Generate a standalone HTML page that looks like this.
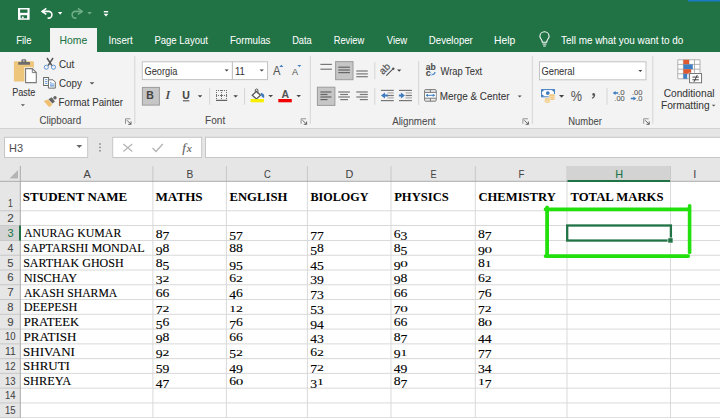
<!DOCTYPE html><html><head><meta charset="utf-8"><style>*{margin:0;padding:0}html,body{width:720px;height:418px;overflow:hidden;background:#fff}svg{display:block}</style></head><body>
<svg width="720" height="418" viewBox="0 0 720 418">
<rect x="0" y="0" width="720" height="52" fill="#217346" />
<rect x="688" y="0" width="32" height="1.5" fill="#1b7ac3" />
<rect x="0" y="52" width="720" height="76" fill="#f3f3f3" />
<rect x="50" y="28" width="47" height="24" fill="#f3f3f3" />
<rect x="0" y="52" width="720" height="77" fill="#f3f3f3" />
<rect x="0" y="128" width="720" height="1" fill="#d3d3d3" />
<rect x="0" y="129" width="720" height="37" fill="#e6e6e6" />
<rect x="18" y="8" width="11.6" height="11.8" fill="#fff" />
<rect x="20.1" y="9.5" width="7.4" height="3.3" fill="#217346" />
<rect x="20.6" y="15.2" width="6.5" height="3.1" fill="#217346" />
<rect x="21.9" y="16.6" width="1.8" height="1.7" fill="#fff" />
<path d="M42.2 11.4 H48.6 A3.3 3.35 0 0 1 48.6 18.1 H47.6" fill="none" stroke="#fff" stroke-width="1.6" />
<path d="M46.3 8.4 L42.1 11.4 L46.3 14.4" fill="none" stroke="#fff" stroke-width="1.6" stroke-linejoin="miter"/>
<path d="M58 12.1 H62.3 L60.15 14.8 Z" fill="#fff" stroke="none" stroke-width="1" />
<path d="M82.2 11.4 H75.4 A3.3 3.35 0 0 0 75.4 18.1 H76.4" fill="none" stroke="#6fae88" stroke-width="1.6" />
<path d="M77.9 8.4 L82.1 11.4 L77.9 14.4" fill="none" stroke="#6fae88" stroke-width="1.6" />
<path d="M87.4 12 H91.8 L89.6 14.5 Z" fill="#6fae88" stroke="none" stroke-width="1" />
<path d="M542.3 42.2 C542.3 39.6 539.9 38.6 539.9 36.4 A4.6 4.6 0 0 1 549.1 36.4 C549.1 38.6 546.7 39.6 546.7 42.2 Z" fill="none" stroke="#fff" stroke-width="1.1" />
<path d="M542.5 44.1 H546.5 M543.2 46 H545.8" fill="none" stroke="#fff" stroke-width="1" />
<rect x="103.8" y="11" width="4.4" height="1.4" fill="#fff" />
<path d="M103.6 13.7 H108.4 L106 16.4 Z" fill="#fff" stroke="none" stroke-width="1" />
<rect x="13.9" y="61.2" width="20" height="20.4" fill="#edc67c" rx="1"/>
<rect x="18.2" y="62" width="11.8" height="2.8" fill="#6d6d6d" rx="0.6"/>
<rect x="21.4" y="59.3" width="4.9" height="3.2" fill="#6d6d6d" rx="1.2"/>
<circle cx="23.85" cy="60.9" r="0.8" fill="#d8d8d8"/>
<path d="M24.4 67.3 H32.9 L37.6 72 V83.6 H24.4 Z" fill="#f3f3f3" stroke="none" stroke-width="1" />
<path d="M25.6 68.6 H32.3 L36.3 72.6 V82.6 H25.6 Z" fill="#fff" stroke="#7a7a7a" stroke-width="1.1" />
<path d="M32.3 68.6 V72.6 H36.3" fill="none" stroke="#7a7a7a" stroke-width="1" />
<path d="M20.8 104.2 H25 L22.9 106.3 Z" fill="#5a5a5a" stroke="none" stroke-width="1" />
<path d="M47 58 L51.9 65.6 M53 58 L48.1 65.6" fill="none" stroke="#555" stroke-width="1.5" />
<circle cx="46.3" cy="67.2" r="2.05" fill="none" stroke="#5a90d0" stroke-width="0.95"/>
<circle cx="53.5" cy="67.2" r="2.05" fill="none" stroke="#5a90d0" stroke-width="0.95"/>
<rect x="43.6" y="77.5" width="5" height="8" fill="#fff" stroke="#6b6b6b" stroke-width="1"/>
<path d="M45 79.6 H47.3 M45 81.5 H47.3 M45 83.4 H47.3" fill="none" stroke="#5b93d3" stroke-width="0.9" />
<path d="M48.4 79.8 H53 L55.3 82.1 V88.1 H48.4 Z" fill="#fff" stroke="#6b6b6b" stroke-width="1" />
<rect x="50" y="83.2" width="4.2" height="3" fill="#a9c8ea" />
<path d="M50 86 H54.2 M50 82.7 H51.5" fill="none" stroke="#5b93d3" stroke-width="0.9" />
<path d="M89.6 82.3 H94.4 L92 84.6 Z" fill="#555" stroke="none" stroke-width="1" />
<path d="M43.7 101.1 L48.1 99.5 L52.4 104.4 L49.3 107.3 Z" fill="#f0c070" stroke="none" stroke-width="1" />
<path d="M48.4 99.2 L51.8 97.2 L54.9 101.5 L52.5 103.4 Z" fill="#646464" stroke="none" stroke-width="1" />
<circle cx="55" cy="97.7" r="1.7" fill="#646464"/>
<rect x="142.3" y="61.8" width="90" height="17.8" fill="#fff" stroke="#c3c3c3" stroke-width="1"/>
<rect x="232.5" y="61.8" width="35" height="17.8" fill="#fff" stroke="#c3c3c3" stroke-width="1"/>
<path d="M224.5 69.4 H228.8 L226.65 71.6 Z" fill="#444" stroke="none" stroke-width="1" />
<path d="M259.6 69.4 H263.9 L261.75 71.6 Z" fill="#444" stroke="none" stroke-width="1" />
<path d="M279.4 66.9 H283.3 L281.35 64.7 Z" fill="#3e7bbf" stroke="none" stroke-width="1" />
<path d="M297.4 64.9 H301.3 L299.35 66.9 Z" fill="#3e7bbf" stroke="none" stroke-width="1" />
<rect x="142.4" y="87.4" width="17" height="17.7" fill="#c6c6c6" stroke="#9c9c9c" stroke-width="1"/>
<rect x="182.9" y="100.3" width="6.4" height="1" fill="#444" />
<path d="M197.8 95.2 H202.3 L200.05 97.4 Z" fill="#444" stroke="none" stroke-width="1" />
<rect x="209.2" y="88" width="1" height="16.7" fill="#d5d5d5" />
<rect x="216" y="90" width="1" height="1" fill="#707070" />
<rect x="216" y="95" width="1" height="1" fill="#707070" />
<rect x="218" y="90" width="1" height="1" fill="#707070" />
<rect x="218" y="95" width="1" height="1" fill="#707070" />
<rect x="220" y="90" width="1" height="1" fill="#707070" />
<rect x="220" y="95" width="1" height="1" fill="#707070" />
<rect x="222" y="90" width="1" height="1" fill="#707070" />
<rect x="222" y="95" width="1" height="1" fill="#707070" />
<rect x="224" y="90" width="1" height="1" fill="#707070" />
<rect x="224" y="95" width="1" height="1" fill="#707070" />
<rect x="226" y="90" width="1" height="1" fill="#707070" />
<rect x="226" y="95" width="1" height="1" fill="#707070" />
<rect x="216" y="92" width="1" height="1" fill="#707070" />
<rect x="216" y="94" width="1" height="1" fill="#707070" />
<rect x="216" y="96" width="1" height="1" fill="#707070" />
<rect x="216" y="98" width="1" height="1" fill="#707070" />
<rect x="221" y="92" width="1" height="1" fill="#707070" />
<rect x="221" y="94" width="1" height="1" fill="#707070" />
<rect x="221" y="96" width="1" height="1" fill="#707070" />
<rect x="221" y="98" width="1" height="1" fill="#707070" />
<rect x="226" y="92" width="1" height="1" fill="#707070" />
<rect x="226" y="94" width="1" height="1" fill="#707070" />
<rect x="226" y="96" width="1" height="1" fill="#707070" />
<rect x="226" y="98" width="1" height="1" fill="#707070" />
<rect x="221" y="90" width="1" height="1" fill="#707070" />
<rect x="221" y="95" width="1" height="1" fill="#707070" />
<rect x="216" y="99.8" width="11.2" height="1.1" fill="#555" />
<path d="M233.3 95.2 H237.9 L235.6 97.5 Z" fill="#444" stroke="none" stroke-width="1" />
<rect x="244" y="88" width="1" height="16.7" fill="#d5d5d5" />
<path d="M252.3 95.2 L256.4 91.4 L260.5 95.2 L256.4 98.9 Z" fill="#fff" stroke="#5a5a5a" stroke-width="1.3" />
<path d="M255.3 92.4 V89.6 Q256.6 88.3 257.9 89.6 V93.6" fill="none" stroke="#5a5a5a" stroke-width="1" />
<path d="M260.6 92.8 C263.8 93.2 264.9 95.6 263.9 98 C262.2 97.6 260.8 95.8 260.6 92.8 Z" fill="#3e7bbf" stroke="none" stroke-width="1" />
<rect x="250.6" y="99" width="13.3" height="3.3" fill="#f7ef00" />
<path d="M268.3 94.9 H273.1 L270.7 97.3 Z" fill="#444" stroke="none" stroke-width="1" />
<rect x="278.3" y="99" width="13.5" height="3.3" fill="#f00000" />
<path d="M296.4 94.9 H301 L298.7 97.3 Z" fill="#444" stroke="none" stroke-width="1" />
<rect x="134.3" y="56" width="1" height="68" fill="#d5d5d5" />
<rect x="309.8" y="56" width="1" height="68" fill="#d5d5d5" />
<rect x="531.8" y="56" width="1" height="68" fill="#d5d5d5" />
<rect x="652.3" y="56" width="1" height="68" fill="#d5d5d5" />
<rect x="374.3" y="62.3" width="1" height="16.799999999999997" fill="#d5d5d5" />
<rect x="374.3" y="87.8" width="1" height="16.900000000000006" fill="#d5d5d5" />
<rect x="418.2" y="61" width="1" height="44" fill="#d5d5d5" />
<rect x="606.5" y="88" width="1" height="16.700000000000003" fill="#d5d5d5" />
<path d="M125.5 123.8 V118.8 H130.5" fill="none" stroke="#888" stroke-width="0.9" />
<path d="M127 120.3 L131 124.3 M131 121.5 V124.3 H128.2" fill="none" stroke="#555" stroke-width="0.9" />
<path d="M301.1 123.8 V118.8 H306.1" fill="none" stroke="#888" stroke-width="0.9" />
<path d="M302.6 120.3 L306.6 124.3 M306.6 121.5 V124.3 H303.8" fill="none" stroke="#555" stroke-width="0.9" />
<path d="M522.9 123.8 V118.8 H527.9" fill="none" stroke="#888" stroke-width="0.9" />
<path d="M524.4 120.3 L528.4 124.3 M528.4 121.5 V124.3 H525.6" fill="none" stroke="#555" stroke-width="0.9" />
<path d="M643.7 123.8 V118.8 H648.7" fill="none" stroke="#888" stroke-width="0.9" />
<path d="M645.2 120.3 L649.2 124.3 M649.2 121.5 V124.3 H646.4000000000001" fill="none" stroke="#555" stroke-width="0.9" />
<rect x="320.4" y="63.800000000000004" width="11.5" height="1.2" fill="#777" />
<rect x="320.4" y="68.60000000000001" width="11.5" height="1.2" fill="#777" />
<rect x="335.6" y="61.6" width="17.4" height="18.1" fill="#c6c6c6" stroke="#9c9c9c" stroke-width="1"/>
<rect x="338.3" y="66.60000000000001" width="11.599999999999966" height="1.2" fill="#666" />
<rect x="338.3" y="69.4" width="11.599999999999966" height="1.2" fill="#666" />
<rect x="338.3" y="72.0" width="11.599999999999966" height="1.2" fill="#666" />
<rect x="356.3" y="70.4" width="11.5" height="1.2" fill="#777" />
<rect x="356.3" y="73.30000000000001" width="11.5" height="1.2" fill="#777" />
<rect x="356.3" y="76.10000000000001" width="11.5" height="1.2" fill="#777" />
<rect x="317.4" y="87.2" width="17.5" height="18.2" fill="#c6c6c6" stroke="#9c9c9c" stroke-width="1"/>
<rect x="320.4" y="91.4" width="11.0" height="1.2" fill="#666" />
<rect x="320.4" y="93.9" width="7.100000000000023" height="1.2" fill="#666" />
<rect x="320.4" y="96.4" width="11.0" height="1.2" fill="#666" />
<rect x="320.4" y="99.0" width="7.100000000000023" height="1.2" fill="#666" />
<rect x="338.3" y="91.4" width="11.599999999999966" height="1.2" fill="#777" />
<rect x="340.2" y="93.9" width="7.800000000000011" height="1.2" fill="#777" />
<rect x="338.3" y="96.4" width="11.599999999999966" height="1.2" fill="#777" />
<rect x="340.2" y="99.0" width="7.800000000000011" height="1.2" fill="#777" />
<rect x="356.3" y="91.4" width="11.5" height="1.2" fill="#777" />
<rect x="359.8" y="93.9" width="8.0" height="1.2" fill="#777" />
<rect x="356.3" y="96.4" width="11.5" height="1.2" fill="#777" />
<rect x="359.8" y="99.0" width="8.0" height="1.2" fill="#777" />
<text transform="translate(383.1,74.9) rotate(-45)" font-family="Liberation Sans" font-size="9.8" fill="#555" stroke="#555" stroke-width="0.2" textLength="11" lengthAdjust="spacingAndGlyphs">ab</text>
<path d="M386.3 75.6 L393 68.9" fill="none" stroke="#555" stroke-width="1.1" />
<circle cx="393.3" cy="68.7" r="1.2" fill="#555"/>
<path d="M397 69.5 H401.3 L399.15 71.8 Z" fill="#444" stroke="none" stroke-width="1" />
<rect x="380.9" y="89.80000000000001" width="12.900000000000034" height="1.2" fill="#777" />
<rect x="380.9" y="100.0" width="12.900000000000034" height="1.2" fill="#777" />
<rect x="387.5" y="92.30000000000001" width="6.300000000000011" height="1.2" fill="#aaa" />
<rect x="387.5" y="97.30000000000001" width="6.300000000000011" height="1.2" fill="#aaa" />
<rect x="387.5" y="94.9" width="6.300000000000011" height="1.2" fill="#777" />
<path d="M381 95.5 L385 92.4 V94.5 H388 V96.5 H385 V98.6 Z" fill="#3e7bbf" stroke="none" stroke-width="1" />
<rect x="399" y="89.80000000000001" width="12.899999999999977" height="1.2" fill="#777" />
<rect x="399" y="100.0" width="12.899999999999977" height="1.2" fill="#777" />
<rect x="405.6" y="92.30000000000001" width="6.2999999999999545" height="1.2" fill="#aaa" />
<rect x="405.6" y="97.30000000000001" width="6.2999999999999545" height="1.2" fill="#aaa" />
<rect x="405.6" y="94.9" width="6.2999999999999545" height="1.2" fill="#777" />
<path d="M404.9 95.5 L400.9 92.4 V94.5 H398.9 V96.5 H400.9 V98.6 Z" fill="#3e7bbf" stroke="none" stroke-width="1" />
<path d="M432.3 74.6 Q434.8 74.6 435 72" fill="none" stroke="#4a86c8" stroke-width="1.2" />
<path d="M431.5 73.6 L432.3 74.6 L431.5 75.5" fill="none" stroke="#4a86c8" stroke-width="0.8" />
<rect x="424.6" y="89.6" width="11.6" height="11.6" fill="#e9e9e9" rx="1" stroke="#7b7b7b" stroke-width="1"/>
<rect x="425.1" y="92.7" width="10.6" height="5.3" fill="#fff" />
<path d="M424.6 92.4 H436.2 M424.6 98.2 H436.2 M430.4 89.6 V92.4 M430.4 98.2 V101.2" fill="none" stroke="#7b7b7b" stroke-width="1" />
<path d="M426.3 95.3 H434.5" fill="none" stroke="#3e7bbf" stroke-width="1" />
<path d="M425.8 95.3 L428 93.7 V96.9 Z M435 95.3 L432.8 93.7 V96.9 Z" fill="#3e7bbf" stroke="none" stroke-width="1" />
<path d="M517.7 95.5 H521.7 L519.7 97.5 Z" fill="#555" stroke="none" stroke-width="1" />
<rect x="539.5" y="61.8" width="106.5" height="18" fill="#fff" stroke="#c3c3c3" stroke-width="1"/>
<path d="M638.3 70 H642.3 L640.3 72 Z" fill="#444" stroke="none" stroke-width="1" />
<rect x="541.6" y="89.6" width="12.8" height="7.2" fill="#fff" stroke="#3e7bbf" stroke-width="1"/>
<circle cx="547.8" cy="93.1" r="1.9" fill="#3e7bbf"/>
<circle cx="542.6" cy="90.6" r="1" fill="#3e7bbf"/>
<circle cx="553.4" cy="90.6" r="1" fill="#3e7bbf"/>
<circle cx="542.6" cy="95.8" r="1" fill="#3e7bbf"/>
<circle cx="553.4" cy="95.8" r="1" fill="#3e7bbf"/>
<rect x="548.6" y="93.8" width="6.6" height="6.6" fill="#f3f3f3" rx="1.5"/>
<rect x="549.1" y="94.3" width="5.6" height="5.6" fill="#efc57a" rx="1.4"/>
<path d="M549.3 96.3 H554.5 M549.3 98.2 H554.5" fill="none" stroke="#fbecd0" stroke-width="0.7" />
<rect x="544.2" y="97.8" width="6.5" height="5.3" fill="#f3f3f3" rx="1.5"/>
<rect x="544.7" y="98.3" width="5.5" height="4.4" fill="#efc57a" rx="1.4"/>
<path d="M544.9 100 H550 M544.9 101.6 H550" fill="none" stroke="#fbecd0" stroke-width="0.7" />
<path d="M559 94.9 H564.1 L561.55 97.7 Z" fill="#444" stroke="none" stroke-width="1" />
<circle cx="593.6" cy="94.4" r="1.3" fill="#555"/>
<path d="M594.6 94.6 Q594.8 96.9 592 98.3" fill="none" stroke="#555" stroke-width="1.2" />
<path d="M612.7 93 L615.6 90.9 V92.2 H618.2 V93.8 H615.6 V95.1 Z" fill="#3e7bbf" stroke="none" stroke-width="1" />
<path d="M636.3 98.5 L633.4 96.4 V97.7 H630.8 V99.3 H633.4 V100.6 Z" fill="#3e7bbf" stroke="none" stroke-width="1" />
<rect x="677.8" y="59.8" width="22.2" height="19" fill="#fff" />
<path d="M677.8 59.8 H700 V78.8 H677.8 Z M677.8 64.4 H700 M677.8 69.2 H700 M677.8 73.8 H700 M683.4 59.8 V78.8 M689 59.8 V78.8 M694.5 59.8 V78.8" fill="none" stroke="#a8a8a8" stroke-width="0.9" />
<rect x="683.4" y="59.8" width="5.6" height="4.6" fill="#e0582e" />
<rect x="683.4" y="64.4" width="9.4" height="4.8" fill="#3f7fc4" />
<rect x="683.4" y="69.2" width="7.8" height="4.6" fill="#e0582e" />
<rect x="683.4" y="73.8" width="3.8" height="5" fill="#3f7fc4" />
<rect x="688.7" y="72.7" width="13.5" height="10.7" fill="#f3f3f3" />
<rect x="689.6" y="73.6" width="12" height="9.2" fill="#fff" stroke="#666" stroke-width="0.9"/>
<path d="M692.4 77.1 H698.8 M692.4 79.8 H698.8 M697.3 75 L694 81.9" fill="none" stroke="#333" stroke-width="0.9" />
<path d="M711.8 104.7 H715.5 L713.65 106.5 Z" fill="#555" stroke="none" stroke-width="1" />
<rect x="4.5" y="137.3" width="83.2" height="20.2" fill="#fff" stroke="#c6c6c6" stroke-width="1"/>
<path d="M76.4 145 H82.2 L79.3 148 Z" fill="#666" stroke="none" stroke-width="1" />
<rect x="99.2" y="143.25" width="1.6" height="1.5" fill="#8a8a8a" />
<rect x="99.2" y="146.65" width="1.6" height="1.5" fill="#8a8a8a" />
<rect x="99.2" y="150.05" width="1.6" height="1.5" fill="#8a8a8a" />
<rect x="112.7" y="137.3" width="89" height="20.2" fill="#fff" stroke="#c6c6c6" stroke-width="1"/>
<path d="M123.3 144 L132.3 151.5 M132.3 144 L123.3 151.5" fill="none" stroke="#b4b4b4" stroke-width="1.2" />
<path d="M152.5 148 L156 151.5 L162.8 144" fill="none" stroke="#b4b4b4" stroke-width="1.4" />
<rect x="205.5" y="137.3" width="520" height="20.2" fill="#fff" stroke="#c6c6c6" stroke-width="1"/>
<rect x="0" y="166" width="720" height="15" fill="#e6e6e6" />
<rect x="0" y="181" width="20.5" height="237" fill="#e6e6e6" />
<rect x="567.5" y="166" width="102.5" height="15" fill="#d3d3d3" />
<rect x="0" y="225.8" width="20" height="14.6" fill="#d3d3d3" />
<line x1="152.9" y1="181" x2="152.9" y2="418" stroke="#d9d9d9" stroke-width="1" />
<line x1="152.9" y1="166" x2="152.9" y2="181" stroke="#c8c8c8" stroke-width="1" />
<line x1="226.4" y1="181" x2="226.4" y2="418" stroke="#d9d9d9" stroke-width="1" />
<line x1="226.4" y1="166" x2="226.4" y2="181" stroke="#c8c8c8" stroke-width="1" />
<line x1="307.4" y1="181" x2="307.4" y2="418" stroke="#d9d9d9" stroke-width="1" />
<line x1="307.4" y1="166" x2="307.4" y2="181" stroke="#c8c8c8" stroke-width="1" />
<line x1="391" y1="181" x2="391" y2="418" stroke="#d9d9d9" stroke-width="1" />
<line x1="391" y1="166" x2="391" y2="181" stroke="#c8c8c8" stroke-width="1" />
<line x1="475.3" y1="181" x2="475.3" y2="418" stroke="#d9d9d9" stroke-width="1" />
<line x1="475.3" y1="166" x2="475.3" y2="181" stroke="#c8c8c8" stroke-width="1" />
<line x1="567" y1="181" x2="567" y2="418" stroke="#d9d9d9" stroke-width="1" />
<line x1="567" y1="166" x2="567" y2="181" stroke="#c8c8c8" stroke-width="1" />
<line x1="670.5" y1="181" x2="670.5" y2="418" stroke="#d9d9d9" stroke-width="1" />
<line x1="670.5" y1="166" x2="670.5" y2="181" stroke="#c8c8c8" stroke-width="1" />
<line x1="21" y1="210.8" x2="720" y2="210.8" stroke="#d9d9d9" stroke-width="1" />
<line x1="0" y1="210.8" x2="20" y2="210.8" stroke="#c8c8c8" stroke-width="1" />
<line x1="21" y1="225.5" x2="720" y2="225.5" stroke="#d9d9d9" stroke-width="1" />
<line x1="0" y1="225.5" x2="20" y2="225.5" stroke="#c8c8c8" stroke-width="1" />
<line x1="21" y1="240.47" x2="720" y2="240.47" stroke="#d9d9d9" stroke-width="1" />
<line x1="0" y1="240.47" x2="20" y2="240.47" stroke="#c8c8c8" stroke-width="1" />
<line x1="21" y1="255.23999999999998" x2="720" y2="255.23999999999998" stroke="#d9d9d9" stroke-width="1" />
<line x1="0" y1="255.23999999999998" x2="20" y2="255.23999999999998" stroke="#c8c8c8" stroke-width="1" />
<line x1="21" y1="270.01" x2="720" y2="270.01" stroke="#d9d9d9" stroke-width="1" />
<line x1="0" y1="270.01" x2="20" y2="270.01" stroke="#c8c8c8" stroke-width="1" />
<line x1="21" y1="284.78" x2="720" y2="284.78" stroke="#d9d9d9" stroke-width="1" />
<line x1="0" y1="284.78" x2="20" y2="284.78" stroke="#c8c8c8" stroke-width="1" />
<line x1="21" y1="299.54999999999995" x2="720" y2="299.54999999999995" stroke="#d9d9d9" stroke-width="1" />
<line x1="0" y1="299.54999999999995" x2="20" y2="299.54999999999995" stroke="#c8c8c8" stroke-width="1" />
<line x1="21" y1="314.32" x2="720" y2="314.32" stroke="#d9d9d9" stroke-width="1" />
<line x1="0" y1="314.32" x2="20" y2="314.32" stroke="#c8c8c8" stroke-width="1" />
<line x1="21" y1="329.09" x2="720" y2="329.09" stroke="#d9d9d9" stroke-width="1" />
<line x1="0" y1="329.09" x2="20" y2="329.09" stroke="#c8c8c8" stroke-width="1" />
<line x1="21" y1="343.86" x2="720" y2="343.86" stroke="#d9d9d9" stroke-width="1" />
<line x1="0" y1="343.86" x2="20" y2="343.86" stroke="#c8c8c8" stroke-width="1" />
<line x1="21" y1="358.63" x2="720" y2="358.63" stroke="#d9d9d9" stroke-width="1" />
<line x1="0" y1="358.63" x2="20" y2="358.63" stroke="#c8c8c8" stroke-width="1" />
<line x1="21" y1="373.4" x2="720" y2="373.4" stroke="#d9d9d9" stroke-width="1" />
<line x1="0" y1="373.4" x2="20" y2="373.4" stroke="#c8c8c8" stroke-width="1" />
<line x1="21" y1="388.16999999999996" x2="720" y2="388.16999999999996" stroke="#d9d9d9" stroke-width="1" />
<line x1="0" y1="388.16999999999996" x2="20" y2="388.16999999999996" stroke="#c8c8c8" stroke-width="1" />
<line x1="21" y1="402.94" x2="720" y2="402.94" stroke="#d9d9d9" stroke-width="1" />
<line x1="0" y1="402.94" x2="20" y2="402.94" stroke="#c8c8c8" stroke-width="1" />
<line x1="21" y1="417.71" x2="720" y2="417.71" stroke="#d9d9d9" stroke-width="1" />
<line x1="0" y1="417.71" x2="20" y2="417.71" stroke="#c8c8c8" stroke-width="1" />
<line x1="0" y1="181.3" x2="720" y2="181.3" stroke="#ababab" stroke-width="1" />
<line x1="20.3" y1="166" x2="20.3" y2="418" stroke="#ababab" stroke-width="1" />
<rect x="567.5" y="180" width="102.5" height="2" fill="#217346" />
<rect x="19" y="225.5" width="2" height="15.1" fill="#217346" />
<path d="M18 170 L18 178.5 L9.5 178.5 Z" fill="#b4b4b4" stroke="none" stroke-width="1" />
<text x="16.14" y="43.60" font-family="Liberation Sans" font-weight="normal" font-style="normal" font-size="11.01" fill="#fff" stroke="#fff" stroke-width="0.03" textLength="15.30" lengthAdjust="spacingAndGlyphs">File</text>
<text x="59.47" y="43.60" font-family="Liberation Sans" font-weight="normal" font-style="normal" font-size="11.01" fill="#217346" stroke="#217346" stroke-width="0.06" textLength="27.71" lengthAdjust="spacingAndGlyphs">Home</text>
<text x="108.53" y="43.60" font-family="Liberation Sans" font-weight="normal" font-style="normal" font-size="11.01" fill="#fff" stroke="#fff" stroke-width="0.03" textLength="24.15" lengthAdjust="spacingAndGlyphs">Insert</text>
<text x="154.44" y="43.60" font-family="Liberation Sans" font-weight="normal" font-style="normal" font-size="11.01" fill="#fff" stroke="#fff" stroke-width="0.03" textLength="53.44" lengthAdjust="spacingAndGlyphs">Page Layout</text>
<text x="229.92" y="43.60" font-family="Liberation Sans" font-weight="normal" font-style="normal" font-size="11.01" fill="#fff" stroke="#fff" stroke-width="0.03" textLength="40.57" lengthAdjust="spacingAndGlyphs">Formulas</text>
<text x="292.16" y="43.60" font-family="Liberation Sans" font-weight="normal" font-style="normal" font-size="11.01" fill="#fff" stroke="#fff" stroke-width="0.03" textLength="19.61" lengthAdjust="spacingAndGlyphs">Data</text>
<text x="333.65" y="43.60" font-family="Liberation Sans" font-weight="normal" font-style="normal" font-size="11.01" fill="#fff" stroke="#fff" stroke-width="0.03" textLength="30.68" lengthAdjust="spacingAndGlyphs">Review</text>
<text x="386.70" y="43.60" font-family="Liberation Sans" font-weight="normal" font-style="normal" font-size="11.01" fill="#fff" stroke="#fff" stroke-width="0.03" textLength="20.53" lengthAdjust="spacingAndGlyphs">View</text>
<text x="428.83" y="43.60" font-family="Liberation Sans" font-weight="normal" font-style="normal" font-size="11.01" fill="#fff" stroke="#fff" stroke-width="0.03" textLength="44.00" lengthAdjust="spacingAndGlyphs">Developer</text>
<text x="494.08" y="43.60" font-family="Liberation Sans" font-weight="normal" font-style="normal" font-size="11.01" fill="#fff" stroke="#fff" stroke-width="0.03" textLength="21.20" lengthAdjust="spacingAndGlyphs">Help</text>
<text x="561.00" y="43.60" font-family="Liberation Sans" font-weight="normal" font-style="normal" font-size="11.01" fill="#fff" stroke="#fff" stroke-width="0.03" textLength="122.36" lengthAdjust="spacingAndGlyphs">Tell me what you want to do</text>
<text x="12.17" y="95.50" font-family="Liberation Sans" font-weight="normal" font-style="normal" font-size="10.87" fill="#363636" stroke="#363636" stroke-width="0.06" textLength="23.26" lengthAdjust="spacingAndGlyphs">Paste</text>
<text x="58.90" y="68.20" font-family="Liberation Sans" font-weight="normal" font-style="normal" font-size="10.87" fill="#363636" stroke="#363636" stroke-width="0.06" textLength="15.48" lengthAdjust="spacingAndGlyphs">Cut</text>
<text x="58.91" y="86.60" font-family="Liberation Sans" font-weight="normal" font-style="normal" font-size="10.87" fill="#363636" stroke="#363636" stroke-width="0.06" textLength="22.99" lengthAdjust="spacingAndGlyphs">Copy</text>
<text x="58.62" y="105.50" font-family="Liberation Sans" font-weight="normal" font-style="normal" font-size="10.87" fill="#363636" stroke="#363636" stroke-width="0.06" textLength="64.41" lengthAdjust="spacingAndGlyphs">Format Painter</text>
<text x="39.41" y="124.30" font-family="Liberation Sans" font-weight="normal" font-style="normal" font-size="10.29" fill="#4a4a4a" stroke="#4a4a4a" stroke-width="0.06" textLength="41.84" lengthAdjust="spacingAndGlyphs">Clipboard</text>
<text x="144.44" y="74.70" font-family="Liberation Sans" font-weight="normal" font-style="normal" font-size="11.45" fill="#363636" stroke="#363636" stroke-width="0.06" textLength="32.93" lengthAdjust="spacingAndGlyphs">Georgia</text>
<text x="234.93" y="74.90" font-family="Liberation Sans" font-weight="normal" font-style="normal" font-size="11.01" fill="#363636" stroke="#363636" stroke-width="0.06" textLength="9.91" lengthAdjust="spacingAndGlyphs">11</text>
<text x="205.10" y="124.40" font-family="Liberation Sans" font-weight="normal" font-style="normal" font-size="10.43" fill="#4a4a4a" stroke="#4a4a4a" stroke-width="0.06" textLength="20.08" lengthAdjust="spacingAndGlyphs">Font</text>
<text x="440.50" y="75.00" font-family="Liberation Sans" font-weight="normal" font-style="normal" font-size="11.45" fill="#363636" stroke="#363636" stroke-width="0.06" textLength="41.68" lengthAdjust="spacingAndGlyphs">Wrap Text</text>
<text x="439.71" y="100.00" font-family="Liberation Sans" font-weight="normal" font-style="normal" font-size="11.45" fill="#363636" stroke="#363636" stroke-width="0.06" textLength="69.72" lengthAdjust="spacingAndGlyphs">Merge &amp; Center</text>
<text x="392.20" y="124.50" font-family="Liberation Sans" font-weight="normal" font-style="normal" font-size="10.43" fill="#4a4a4a" stroke="#4a4a4a" stroke-width="0.06" textLength="43.38" lengthAdjust="spacingAndGlyphs">Alignment</text>
<text x="541.54" y="74.70" font-family="Liberation Sans" font-weight="normal" font-style="normal" font-size="11.45" fill="#363636" stroke="#363636" stroke-width="0.06" textLength="33.04" lengthAdjust="spacingAndGlyphs">General</text>
<text x="568.24" y="124.50" font-family="Liberation Sans" font-weight="normal" font-style="normal" font-size="10.43" fill="#4a4a4a" stroke="#4a4a4a" stroke-width="0.06" textLength="33.58" lengthAdjust="spacingAndGlyphs">Number</text>
<text x="663.69" y="96.50" font-family="Liberation Sans" font-weight="normal" font-style="normal" font-size="11.45" fill="#363636" stroke="#363636" stroke-width="0.06" textLength="50.94" lengthAdjust="spacingAndGlyphs">Conditional</text>
<text x="660.99" y="109.30" font-family="Liberation Sans" font-weight="normal" font-style="normal" font-size="11.45" fill="#363636" stroke="#363636" stroke-width="0.06" textLength="48.58" lengthAdjust="spacingAndGlyphs">Formatting</text>
<text x="9.03" y="151.70" font-family="Liberation Sans" font-weight="normal" font-style="normal" font-size="10.72" fill="#505050" stroke="#505050" stroke-width="0.06" textLength="13.97" lengthAdjust="spacingAndGlyphs">H3</text>
<text x="273.00" y="75.30" font-family="Liberation Sans" font-weight="normal" font-style="normal" font-size="12.17" fill="#555" stroke="#555" stroke-width="0.06" textLength="7.47" lengthAdjust="spacingAndGlyphs">A</text>
<text x="291.90" y="75.30" font-family="Liberation Sans" font-weight="normal" font-style="normal" font-size="9.28" fill="#555" stroke="#555" stroke-width="0.06" textLength="6.07" lengthAdjust="spacingAndGlyphs">A</text>
<text x="146.27" y="99.40" font-family="Liberation Sans" font-weight="bold" font-style="normal" font-size="10.86" fill="#444" stroke="#444" stroke-width="0.06" textLength="7.57" lengthAdjust="spacingAndGlyphs">B</text>
<text x="165.35" y="99.40" font-family="Liberation Serif" font-weight="normal" font-style="italic" font-size="11.69" fill="#444" stroke="#444" stroke-width="0.12" textLength="4.95" lengthAdjust="spacingAndGlyphs">I</text>
<text x="182.27" y="99.00" font-family="Liberation Sans" font-weight="bold" font-style="normal" font-size="10.29" fill="#444" stroke="#444" stroke-width="0.06" textLength="7.58" lengthAdjust="spacingAndGlyphs">U</text>
<text x="281.59" y="98.20" font-family="Liberation Sans" font-weight="bold" font-style="normal" font-size="10.14" fill="#555" stroke="#555" stroke-width="0.06" textLength="7.54" lengthAdjust="spacingAndGlyphs">A</text>
<text x="425.83" y="70.30" font-family="Liberation Sans" font-weight="bold" font-style="normal" font-size="9.14" fill="#4a4a4a" stroke="#4a4a4a" stroke-width="0.06" textLength="10.02" lengthAdjust="spacingAndGlyphs">ab</text>
<text x="425.72" y="76.00" font-family="Liberation Sans" font-weight="bold" font-style="normal" font-size="8.86" fill="#4a4a4a" stroke="#4a4a4a" stroke-width="0.06" textLength="5.12" lengthAdjust="spacingAndGlyphs">c</text>
<text x="570.82" y="100.80" font-family="Liberation Sans" font-weight="normal" font-style="normal" font-size="13.77" fill="#5a5a5a" stroke="#5a5a5a" stroke-width="0.06" textLength="11.25" lengthAdjust="spacingAndGlyphs">%</text>
<text x="618.09" y="94.90" font-family="Liberation Sans" font-weight="normal" font-style="normal" font-size="6.81" fill="#555" stroke="#555" stroke-width="0.06" textLength="6.60" lengthAdjust="spacingAndGlyphs">.0</text>
<text x="614.33" y="101.00" font-family="Liberation Sans" font-weight="normal" font-style="normal" font-size="7.25" fill="#555" stroke="#555" stroke-width="0.06" textLength="10.34" lengthAdjust="spacingAndGlyphs">.00</text>
<text x="632.02" y="94.90" font-family="Liberation Sans" font-weight="normal" font-style="normal" font-size="6.81" fill="#555" stroke="#555" stroke-width="0.06" textLength="10.45" lengthAdjust="spacingAndGlyphs">.00</text>
<text x="636.23" y="101.00" font-family="Liberation Sans" font-weight="normal" font-style="normal" font-size="7.25" fill="#555" stroke="#555" stroke-width="0.06" textLength="6.24" lengthAdjust="spacingAndGlyphs">.0</text>
<text x="182.27" y="151.50" font-family="Liberation Serif" font-weight="normal" font-style="italic" font-size="11.54" fill="#606060" stroke="#606060" stroke-width="0.12" textLength="3.63" lengthAdjust="spacingAndGlyphs">f</text>
<text x="186.83" y="152.20" font-family="Liberation Serif" font-weight="normal" font-style="italic" font-size="10.46" fill="#606060" stroke="#606060" stroke-width="0.12" textLength="5.02" lengthAdjust="spacingAndGlyphs">x</text>
<text x="83.45" y="177.80" font-family="Liberation Sans" font-weight="normal" font-style="normal" font-size="11.01" fill="#444" stroke="#444" stroke-width="0.06" textLength="7.27" lengthAdjust="spacingAndGlyphs">A</text>
<text x="186.59" y="177.80" font-family="Liberation Sans" font-weight="normal" font-style="normal" font-size="11.01" fill="#444" stroke="#444" stroke-width="0.06" textLength="6.79" lengthAdjust="spacingAndGlyphs">B</text>
<text x="263.93" y="177.80" font-family="Liberation Sans" font-weight="normal" font-style="normal" font-size="11.01" fill="#444" stroke="#444" stroke-width="0.06" textLength="6.77" lengthAdjust="spacingAndGlyphs">C</text>
<text x="345.58" y="177.80" font-family="Liberation Sans" font-weight="normal" font-style="normal" font-size="11.01" fill="#444" stroke="#444" stroke-width="0.06" textLength="7.82" lengthAdjust="spacingAndGlyphs">D</text>
<text x="430.42" y="177.80" font-family="Liberation Sans" font-weight="normal" font-style="normal" font-size="11.01" fill="#444" stroke="#444" stroke-width="0.06" textLength="6.06" lengthAdjust="spacingAndGlyphs">E</text>
<text x="518.48" y="177.80" font-family="Liberation Sans" font-weight="normal" font-style="normal" font-size="11.01" fill="#444" stroke="#444" stroke-width="0.06" textLength="5.86" lengthAdjust="spacingAndGlyphs">F</text>
<text x="615.28" y="177.80" font-family="Liberation Sans" font-weight="normal" font-style="normal" font-size="11.01" fill="#217346" stroke="#217346" stroke-width="0.06" textLength="7.86" lengthAdjust="spacingAndGlyphs">H</text>
<text x="693.36" y="177.80" font-family="Liberation Sans" font-weight="normal" font-style="normal" font-size="11.01" fill="#444" stroke="#444" stroke-width="0" textLength="3.06" lengthAdjust="spacingAndGlyphs">I</text>
<text x="8.00" y="207.30" font-family="Liberation Sans" font-weight="normal" font-style="normal" font-size="10.14" fill="#444" stroke="#444" stroke-width="0.06" textLength="4.80" lengthAdjust="spacingAndGlyphs">1</text>
<text x="7.21" y="222.00" font-family="Liberation Sans" font-weight="normal" font-style="normal" font-size="10.14" fill="#444" stroke="#444" stroke-width="0.06" textLength="6.53" lengthAdjust="spacingAndGlyphs">2</text>
<text x="7.47" y="236.97" font-family="Liberation Sans" font-weight="normal" font-style="normal" font-size="10.14" fill="#217346" stroke="#217346" stroke-width="0.06" textLength="6.13" lengthAdjust="spacingAndGlyphs">3</text>
<text x="7.59" y="251.74" font-family="Liberation Sans" font-weight="normal" font-style="normal" font-size="10.14" fill="#444" stroke="#444" stroke-width="0.06" textLength="5.89" lengthAdjust="spacingAndGlyphs">4</text>
<text x="7.35" y="266.51" font-family="Liberation Sans" font-weight="normal" font-style="normal" font-size="10.14" fill="#444" stroke="#444" stroke-width="0.06" textLength="6.26" lengthAdjust="spacingAndGlyphs">5</text>
<text x="7.23" y="281.28" font-family="Liberation Sans" font-weight="normal" font-style="normal" font-size="10.14" fill="#444" stroke="#444" stroke-width="0.06" textLength="6.39" lengthAdjust="spacingAndGlyphs">6</text>
<text x="7.21" y="296.05" font-family="Liberation Sans" font-weight="normal" font-style="normal" font-size="10.14" fill="#444" stroke="#444" stroke-width="0.06" textLength="6.53" lengthAdjust="spacingAndGlyphs">7</text>
<text x="7.35" y="310.82" font-family="Liberation Sans" font-weight="normal" font-style="normal" font-size="10.14" fill="#444" stroke="#444" stroke-width="0.06" textLength="6.26" lengthAdjust="spacingAndGlyphs">8</text>
<text x="7.34" y="325.59" font-family="Liberation Sans" font-weight="normal" font-style="normal" font-size="10.14" fill="#444" stroke="#444" stroke-width="0.06" textLength="6.39" lengthAdjust="spacingAndGlyphs">9</text>
<text x="5.03" y="340.36" font-family="Liberation Sans" font-weight="normal" font-style="normal" font-size="10.14" fill="#444" stroke="#444" stroke-width="0.06" textLength="10.61" lengthAdjust="spacingAndGlyphs">10</text>
<text x="4.97" y="355.13" font-family="Liberation Sans" font-weight="normal" font-style="normal" font-size="10.14" fill="#444" stroke="#444" stroke-width="0.06" textLength="10.81" lengthAdjust="spacingAndGlyphs">11</text>
<text x="5.03" y="369.90" font-family="Liberation Sans" font-weight="normal" font-style="normal" font-size="10.14" fill="#444" stroke="#444" stroke-width="0.06" textLength="10.72" lengthAdjust="spacingAndGlyphs">12</text>
<text x="5.03" y="384.67" font-family="Liberation Sans" font-weight="normal" font-style="normal" font-size="10.14" fill="#444" stroke="#444" stroke-width="0.06" textLength="10.61" lengthAdjust="spacingAndGlyphs">13</text>
<text x="5.04" y="399.44" font-family="Liberation Sans" font-weight="normal" font-style="normal" font-size="10.14" fill="#444" stroke="#444" stroke-width="0.06" textLength="10.51" lengthAdjust="spacingAndGlyphs">14</text>
<text x="5.03" y="414.21" font-family="Liberation Sans" font-weight="normal" font-style="normal" font-size="10.14" fill="#444" stroke="#444" stroke-width="0.06" textLength="10.61" lengthAdjust="spacingAndGlyphs">15</text>
<text x="22.85" y="201.00" font-family="Liberation Serif" font-weight="bold" font-style="normal" font-size="13.08" fill="#000" stroke="#000" stroke-width="0" textLength="104.36" lengthAdjust="spacingAndGlyphs">STUDENT NAME</text>
<text x="155.47" y="201.00" font-family="Liberation Serif" font-weight="bold" font-style="normal" font-size="13.08" fill="#000" stroke="#000" stroke-width="0" textLength="47.21" lengthAdjust="spacingAndGlyphs">MATHS</text>
<text x="229.47" y="201.00" font-family="Liberation Serif" font-weight="bold" font-style="normal" font-size="13.08" fill="#000" stroke="#000" stroke-width="0" textLength="57.93" lengthAdjust="spacingAndGlyphs">ENGLISH</text>
<text x="310.48" y="201.00" font-family="Liberation Serif" font-weight="bold" font-style="normal" font-size="13.08" fill="#000" stroke="#000" stroke-width="0" textLength="57.97" lengthAdjust="spacingAndGlyphs">BIOLOGY</text>
<text x="394.17" y="201.00" font-family="Liberation Serif" font-weight="bold" font-style="normal" font-size="13.08" fill="#000" stroke="#000" stroke-width="0" textLength="54.58" lengthAdjust="spacingAndGlyphs">PHYSICS</text>
<text x="478.40" y="201.00" font-family="Liberation Serif" font-weight="bold" font-style="normal" font-size="13.08" fill="#000" stroke="#000" stroke-width="0" textLength="77.36" lengthAdjust="spacingAndGlyphs">CHEMISTRY</text>
<text x="570.47" y="201.00" font-family="Liberation Serif" font-weight="bold" font-style="normal" font-size="13.08" fill="#000" stroke="#000" stroke-width="0" textLength="93.08" lengthAdjust="spacingAndGlyphs">TOTAL MARKS</text>
<text x="23.90" y="237.47" font-family="Liberation Serif" font-weight="normal" font-style="normal" font-size="12.77" fill="#000" stroke="#000" stroke-width="0.12" textLength="97.36" lengthAdjust="spacingAndGlyphs">ANURAG KUMAR</text>
<text x="23.17" y="252.24" font-family="Liberation Serif" font-weight="normal" font-style="normal" font-size="12.77" fill="#000" stroke="#000" stroke-width="0.12" textLength="121.65" lengthAdjust="spacingAndGlyphs">SAPTARSHI MONDAL</text>
<text x="23.18" y="267.01" font-family="Liberation Serif" font-weight="normal" font-style="normal" font-size="12.77" fill="#000" stroke="#000" stroke-width="0.12" textLength="100.49" lengthAdjust="spacingAndGlyphs">SARTHAK GHOSH</text>
<text x="23.65" y="281.78" font-family="Liberation Serif" font-weight="normal" font-style="normal" font-size="12.77" fill="#000" stroke="#000" stroke-width="0.12" textLength="53.62" lengthAdjust="spacingAndGlyphs">NISCHAY</text>
<text x="23.90" y="296.55" font-family="Liberation Serif" font-weight="normal" font-style="normal" font-size="12.77" fill="#000" stroke="#000" stroke-width="0.12" textLength="93.43" lengthAdjust="spacingAndGlyphs">AKASH SHARMA</text>
<text x="23.66" y="311.32" font-family="Liberation Serif" font-weight="normal" font-style="normal" font-size="12.77" fill="#000" stroke="#000" stroke-width="0.12" textLength="53.62" lengthAdjust="spacingAndGlyphs">DEEPESH</text>
<text x="23.65" y="326.09" font-family="Liberation Serif" font-weight="normal" font-style="normal" font-size="12.77" fill="#000" stroke="#000" stroke-width="0.12" textLength="55.38" lengthAdjust="spacingAndGlyphs">PRATEEK</text>
<text x="23.64" y="340.86" font-family="Liberation Serif" font-weight="normal" font-style="normal" font-size="12.77" fill="#000" stroke="#000" stroke-width="0.12" textLength="52.75" lengthAdjust="spacingAndGlyphs">PRATISH</text>
<text x="23.12" y="355.63" font-family="Liberation Serif" font-weight="normal" font-style="normal" font-size="12.77" fill="#000" stroke="#000" stroke-width="0.12" textLength="51.81" lengthAdjust="spacingAndGlyphs">SHIVANI</text>
<text x="23.12" y="370.40" font-family="Liberation Serif" font-weight="normal" font-style="normal" font-size="12.77" fill="#000" stroke="#000" stroke-width="0.12" textLength="46.81" lengthAdjust="spacingAndGlyphs">SHRUTI</text>
<text x="23.16" y="385.17" font-family="Liberation Serif" font-weight="normal" font-style="normal" font-size="12.77" fill="#000" stroke="#000" stroke-width="0.12" textLength="47.97" lengthAdjust="spacingAndGlyphs">SHREYA</text>
<text transform="translate(155.70,237.57) scale(1.13,1.07)" font-family="Liberation Serif" font-size="12.1" fill="#000" stroke="#000" stroke-width="0.12">8</text>
<text transform="translate(162.45,239.97) scale(1.13,1)" font-family="Liberation Serif" font-size="12.1" fill="#000" stroke="#000" stroke-width="0.12">7</text>
<text transform="translate(229.20,239.97) scale(1.13,1)" font-family="Liberation Serif" font-size="12.1" fill="#000" stroke="#000" stroke-width="0.12">5</text>
<text transform="translate(235.95,239.97) scale(1.13,1)" font-family="Liberation Serif" font-size="12.1" fill="#000" stroke="#000" stroke-width="0.12">7</text>
<text transform="translate(310.20,239.97) scale(1.13,1)" font-family="Liberation Serif" font-size="12.1" fill="#000" stroke="#000" stroke-width="0.12">7</text>
<text transform="translate(316.95,239.97) scale(1.13,1)" font-family="Liberation Serif" font-size="12.1" fill="#000" stroke="#000" stroke-width="0.12">7</text>
<text transform="translate(393.80,237.57) scale(1.13,1.07)" font-family="Liberation Serif" font-size="12.1" fill="#000" stroke="#000" stroke-width="0.12">6</text>
<text transform="translate(400.55,239.97) scale(1.13,1)" font-family="Liberation Serif" font-size="12.1" fill="#000" stroke="#000" stroke-width="0.12">3</text>
<text transform="translate(478.10,237.57) scale(1.13,1.07)" font-family="Liberation Serif" font-size="12.1" fill="#000" stroke="#000" stroke-width="0.12">8</text>
<text transform="translate(484.85,239.97) scale(1.13,1)" font-family="Liberation Serif" font-size="12.1" fill="#000" stroke="#000" stroke-width="0.12">7</text>
<text transform="translate(155.70,254.74) scale(1.13,1)" font-family="Liberation Serif" font-size="12.1" fill="#000" stroke="#000" stroke-width="0.12">9</text>
<text transform="translate(162.45,252.34) scale(1.13,1.07)" font-family="Liberation Serif" font-size="12.1" fill="#000" stroke="#000" stroke-width="0.12">8</text>
<text transform="translate(229.20,252.34) scale(1.13,1.07)" font-family="Liberation Serif" font-size="12.1" fill="#000" stroke="#000" stroke-width="0.12">8</text>
<text transform="translate(235.95,252.34) scale(1.13,1.07)" font-family="Liberation Serif" font-size="12.1" fill="#000" stroke="#000" stroke-width="0.12">8</text>
<text transform="translate(310.20,254.74) scale(1.13,1)" font-family="Liberation Serif" font-size="12.1" fill="#000" stroke="#000" stroke-width="0.12">5</text>
<text transform="translate(316.95,252.34) scale(1.13,1.07)" font-family="Liberation Serif" font-size="12.1" fill="#000" stroke="#000" stroke-width="0.12">8</text>
<text transform="translate(393.80,252.34) scale(1.13,1.07)" font-family="Liberation Serif" font-size="12.1" fill="#000" stroke="#000" stroke-width="0.12">8</text>
<text transform="translate(400.55,254.74) scale(1.13,1)" font-family="Liberation Serif" font-size="12.1" fill="#000" stroke="#000" stroke-width="0.12">5</text>
<text transform="translate(478.10,254.74) scale(1.13,1)" font-family="Liberation Serif" font-size="12.1" fill="#000" stroke="#000" stroke-width="0.12">9</text>
<text transform="translate(484.55,252.54) scale(1.25,0.68)" font-family="Liberation Serif" font-size="12.1" fill="#000" stroke="#000" stroke-width="0.12">0</text>
<text transform="translate(155.70,267.11) scale(1.13,1.07)" font-family="Liberation Serif" font-size="12.1" fill="#000" stroke="#000" stroke-width="0.12">8</text>
<text transform="translate(162.45,269.51) scale(1.13,1)" font-family="Liberation Serif" font-size="12.1" fill="#000" stroke="#000" stroke-width="0.12">5</text>
<text transform="translate(229.20,269.51) scale(1.13,1)" font-family="Liberation Serif" font-size="12.1" fill="#000" stroke="#000" stroke-width="0.12">9</text>
<text transform="translate(235.95,269.51) scale(1.13,1)" font-family="Liberation Serif" font-size="12.1" fill="#000" stroke="#000" stroke-width="0.12">5</text>
<text transform="translate(310.20,269.51) scale(1.13,1)" font-family="Liberation Serif" font-size="12.1" fill="#000" stroke="#000" stroke-width="0.12">4</text>
<text transform="translate(316.95,269.51) scale(1.13,1)" font-family="Liberation Serif" font-size="12.1" fill="#000" stroke="#000" stroke-width="0.12">5</text>
<text transform="translate(393.80,269.51) scale(1.13,1)" font-family="Liberation Serif" font-size="12.1" fill="#000" stroke="#000" stroke-width="0.12">9</text>
<text transform="translate(400.25,267.31) scale(1.25,0.68)" font-family="Liberation Serif" font-size="12.1" fill="#000" stroke="#000" stroke-width="0.12">0</text>
<text transform="translate(478.10,267.11) scale(1.13,1.07)" font-family="Liberation Serif" font-size="12.1" fill="#000" stroke="#000" stroke-width="0.12">8</text>
<text transform="translate(484.85,267.31) scale(1.13,0.68)" font-family="Liberation Serif" font-size="12.1" fill="#000" stroke="#000" stroke-width="0.12">1</text>
<text transform="translate(155.70,284.28) scale(1.13,1)" font-family="Liberation Serif" font-size="12.1" fill="#000" stroke="#000" stroke-width="0.12">3</text>
<text transform="translate(162.45,282.08) scale(1.13,0.68)" font-family="Liberation Serif" font-size="12.1" fill="#000" stroke="#000" stroke-width="0.12">2</text>
<text transform="translate(229.20,281.88) scale(1.13,1.07)" font-family="Liberation Serif" font-size="12.1" fill="#000" stroke="#000" stroke-width="0.12">6</text>
<text transform="translate(235.95,282.08) scale(1.13,0.68)" font-family="Liberation Serif" font-size="12.1" fill="#000" stroke="#000" stroke-width="0.12">2</text>
<text transform="translate(310.20,284.28) scale(1.13,1)" font-family="Liberation Serif" font-size="12.1" fill="#000" stroke="#000" stroke-width="0.12">3</text>
<text transform="translate(316.95,284.28) scale(1.13,1)" font-family="Liberation Serif" font-size="12.1" fill="#000" stroke="#000" stroke-width="0.12">9</text>
<text transform="translate(393.80,284.28) scale(1.13,1)" font-family="Liberation Serif" font-size="12.1" fill="#000" stroke="#000" stroke-width="0.12">9</text>
<text transform="translate(400.55,281.88) scale(1.13,1.07)" font-family="Liberation Serif" font-size="12.1" fill="#000" stroke="#000" stroke-width="0.12">8</text>
<text transform="translate(478.10,281.88) scale(1.13,1.07)" font-family="Liberation Serif" font-size="12.1" fill="#000" stroke="#000" stroke-width="0.12">6</text>
<text transform="translate(484.85,282.08) scale(1.13,0.68)" font-family="Liberation Serif" font-size="12.1" fill="#000" stroke="#000" stroke-width="0.12">2</text>
<text transform="translate(155.70,296.65) scale(1.13,1.07)" font-family="Liberation Serif" font-size="12.1" fill="#000" stroke="#000" stroke-width="0.12">6</text>
<text transform="translate(162.45,296.65) scale(1.13,1.07)" font-family="Liberation Serif" font-size="12.1" fill="#000" stroke="#000" stroke-width="0.12">6</text>
<text transform="translate(229.20,299.05) scale(1.13,1)" font-family="Liberation Serif" font-size="12.1" fill="#000" stroke="#000" stroke-width="0.12">4</text>
<text transform="translate(235.95,296.65) scale(1.13,1.07)" font-family="Liberation Serif" font-size="12.1" fill="#000" stroke="#000" stroke-width="0.12">6</text>
<text transform="translate(310.20,299.05) scale(1.13,1)" font-family="Liberation Serif" font-size="12.1" fill="#000" stroke="#000" stroke-width="0.12">7</text>
<text transform="translate(316.95,299.05) scale(1.13,1)" font-family="Liberation Serif" font-size="12.1" fill="#000" stroke="#000" stroke-width="0.12">3</text>
<text transform="translate(393.80,296.65) scale(1.13,1.07)" font-family="Liberation Serif" font-size="12.1" fill="#000" stroke="#000" stroke-width="0.12">6</text>
<text transform="translate(400.55,296.65) scale(1.13,1.07)" font-family="Liberation Serif" font-size="12.1" fill="#000" stroke="#000" stroke-width="0.12">6</text>
<text transform="translate(478.10,299.05) scale(1.13,1)" font-family="Liberation Serif" font-size="12.1" fill="#000" stroke="#000" stroke-width="0.12">7</text>
<text transform="translate(484.85,296.65) scale(1.13,1.07)" font-family="Liberation Serif" font-size="12.1" fill="#000" stroke="#000" stroke-width="0.12">6</text>
<text transform="translate(155.70,313.82) scale(1.13,1)" font-family="Liberation Serif" font-size="12.1" fill="#000" stroke="#000" stroke-width="0.12">7</text>
<text transform="translate(162.45,311.62) scale(1.13,0.68)" font-family="Liberation Serif" font-size="12.1" fill="#000" stroke="#000" stroke-width="0.12">2</text>
<text transform="translate(229.20,311.62) scale(1.13,0.68)" font-family="Liberation Serif" font-size="12.1" fill="#000" stroke="#000" stroke-width="0.12">1</text>
<text transform="translate(235.95,311.62) scale(1.13,0.68)" font-family="Liberation Serif" font-size="12.1" fill="#000" stroke="#000" stroke-width="0.12">2</text>
<text transform="translate(310.20,313.82) scale(1.13,1)" font-family="Liberation Serif" font-size="12.1" fill="#000" stroke="#000" stroke-width="0.12">5</text>
<text transform="translate(316.95,313.82) scale(1.13,1)" font-family="Liberation Serif" font-size="12.1" fill="#000" stroke="#000" stroke-width="0.12">3</text>
<text transform="translate(393.80,313.82) scale(1.13,1)" font-family="Liberation Serif" font-size="12.1" fill="#000" stroke="#000" stroke-width="0.12">7</text>
<text transform="translate(400.25,311.62) scale(1.25,0.68)" font-family="Liberation Serif" font-size="12.1" fill="#000" stroke="#000" stroke-width="0.12">0</text>
<text transform="translate(478.10,313.82) scale(1.13,1)" font-family="Liberation Serif" font-size="12.1" fill="#000" stroke="#000" stroke-width="0.12">7</text>
<text transform="translate(484.85,311.62) scale(1.13,0.68)" font-family="Liberation Serif" font-size="12.1" fill="#000" stroke="#000" stroke-width="0.12">2</text>
<text transform="translate(155.70,328.59) scale(1.13,1)" font-family="Liberation Serif" font-size="12.1" fill="#000" stroke="#000" stroke-width="0.12">5</text>
<text transform="translate(162.45,326.19) scale(1.13,1.07)" font-family="Liberation Serif" font-size="12.1" fill="#000" stroke="#000" stroke-width="0.12">6</text>
<text transform="translate(229.20,328.59) scale(1.13,1)" font-family="Liberation Serif" font-size="12.1" fill="#000" stroke="#000" stroke-width="0.12">7</text>
<text transform="translate(235.95,326.19) scale(1.13,1.07)" font-family="Liberation Serif" font-size="12.1" fill="#000" stroke="#000" stroke-width="0.12">6</text>
<text transform="translate(310.20,328.59) scale(1.13,1)" font-family="Liberation Serif" font-size="12.1" fill="#000" stroke="#000" stroke-width="0.12">9</text>
<text transform="translate(316.95,328.59) scale(1.13,1)" font-family="Liberation Serif" font-size="12.1" fill="#000" stroke="#000" stroke-width="0.12">4</text>
<text transform="translate(393.80,326.19) scale(1.13,1.07)" font-family="Liberation Serif" font-size="12.1" fill="#000" stroke="#000" stroke-width="0.12">6</text>
<text transform="translate(400.55,326.19) scale(1.13,1.07)" font-family="Liberation Serif" font-size="12.1" fill="#000" stroke="#000" stroke-width="0.12">6</text>
<text transform="translate(478.10,326.19) scale(1.13,1.07)" font-family="Liberation Serif" font-size="12.1" fill="#000" stroke="#000" stroke-width="0.12">8</text>
<text transform="translate(484.55,326.39) scale(1.25,0.68)" font-family="Liberation Serif" font-size="12.1" fill="#000" stroke="#000" stroke-width="0.12">0</text>
<text transform="translate(155.70,343.36) scale(1.13,1)" font-family="Liberation Serif" font-size="12.1" fill="#000" stroke="#000" stroke-width="0.12">9</text>
<text transform="translate(162.45,340.96) scale(1.13,1.07)" font-family="Liberation Serif" font-size="12.1" fill="#000" stroke="#000" stroke-width="0.12">8</text>
<text transform="translate(229.20,340.96) scale(1.13,1.07)" font-family="Liberation Serif" font-size="12.1" fill="#000" stroke="#000" stroke-width="0.12">6</text>
<text transform="translate(235.95,340.96) scale(1.13,1.07)" font-family="Liberation Serif" font-size="12.1" fill="#000" stroke="#000" stroke-width="0.12">6</text>
<text transform="translate(310.20,343.36) scale(1.13,1)" font-family="Liberation Serif" font-size="12.1" fill="#000" stroke="#000" stroke-width="0.12">4</text>
<text transform="translate(316.95,343.36) scale(1.13,1)" font-family="Liberation Serif" font-size="12.1" fill="#000" stroke="#000" stroke-width="0.12">3</text>
<text transform="translate(393.80,340.96) scale(1.13,1.07)" font-family="Liberation Serif" font-size="12.1" fill="#000" stroke="#000" stroke-width="0.12">8</text>
<text transform="translate(400.55,343.36) scale(1.13,1)" font-family="Liberation Serif" font-size="12.1" fill="#000" stroke="#000" stroke-width="0.12">7</text>
<text transform="translate(478.10,343.36) scale(1.13,1)" font-family="Liberation Serif" font-size="12.1" fill="#000" stroke="#000" stroke-width="0.12">4</text>
<text transform="translate(484.85,343.36) scale(1.13,1)" font-family="Liberation Serif" font-size="12.1" fill="#000" stroke="#000" stroke-width="0.12">4</text>
<text transform="translate(155.70,358.13) scale(1.13,1)" font-family="Liberation Serif" font-size="12.1" fill="#000" stroke="#000" stroke-width="0.12">9</text>
<text transform="translate(162.45,355.93) scale(1.13,0.68)" font-family="Liberation Serif" font-size="12.1" fill="#000" stroke="#000" stroke-width="0.12">2</text>
<text transform="translate(229.20,358.13) scale(1.13,1)" font-family="Liberation Serif" font-size="12.1" fill="#000" stroke="#000" stroke-width="0.12">5</text>
<text transform="translate(235.95,355.93) scale(1.13,0.68)" font-family="Liberation Serif" font-size="12.1" fill="#000" stroke="#000" stroke-width="0.12">2</text>
<text transform="translate(310.20,355.73) scale(1.13,1.07)" font-family="Liberation Serif" font-size="12.1" fill="#000" stroke="#000" stroke-width="0.12">6</text>
<text transform="translate(316.95,355.93) scale(1.13,0.68)" font-family="Liberation Serif" font-size="12.1" fill="#000" stroke="#000" stroke-width="0.12">2</text>
<text transform="translate(393.80,358.13) scale(1.13,1)" font-family="Liberation Serif" font-size="12.1" fill="#000" stroke="#000" stroke-width="0.12">9</text>
<text transform="translate(400.55,355.93) scale(1.13,0.68)" font-family="Liberation Serif" font-size="12.1" fill="#000" stroke="#000" stroke-width="0.12">1</text>
<text transform="translate(478.10,358.13) scale(1.13,1)" font-family="Liberation Serif" font-size="12.1" fill="#000" stroke="#000" stroke-width="0.12">7</text>
<text transform="translate(484.85,358.13) scale(1.13,1)" font-family="Liberation Serif" font-size="12.1" fill="#000" stroke="#000" stroke-width="0.12">7</text>
<text transform="translate(155.70,372.90) scale(1.13,1)" font-family="Liberation Serif" font-size="12.1" fill="#000" stroke="#000" stroke-width="0.12">5</text>
<text transform="translate(162.45,372.90) scale(1.13,1)" font-family="Liberation Serif" font-size="12.1" fill="#000" stroke="#000" stroke-width="0.12">9</text>
<text transform="translate(229.20,372.90) scale(1.13,1)" font-family="Liberation Serif" font-size="12.1" fill="#000" stroke="#000" stroke-width="0.12">4</text>
<text transform="translate(235.95,372.90) scale(1.13,1)" font-family="Liberation Serif" font-size="12.1" fill="#000" stroke="#000" stroke-width="0.12">9</text>
<text transform="translate(310.20,372.90) scale(1.13,1)" font-family="Liberation Serif" font-size="12.1" fill="#000" stroke="#000" stroke-width="0.12">7</text>
<text transform="translate(316.95,370.70) scale(1.13,0.68)" font-family="Liberation Serif" font-size="12.1" fill="#000" stroke="#000" stroke-width="0.12">2</text>
<text transform="translate(393.80,372.90) scale(1.13,1)" font-family="Liberation Serif" font-size="12.1" fill="#000" stroke="#000" stroke-width="0.12">4</text>
<text transform="translate(400.55,372.90) scale(1.13,1)" font-family="Liberation Serif" font-size="12.1" fill="#000" stroke="#000" stroke-width="0.12">9</text>
<text transform="translate(478.10,372.90) scale(1.13,1)" font-family="Liberation Serif" font-size="12.1" fill="#000" stroke="#000" stroke-width="0.12">3</text>
<text transform="translate(484.85,372.90) scale(1.13,1)" font-family="Liberation Serif" font-size="12.1" fill="#000" stroke="#000" stroke-width="0.12">4</text>
<text transform="translate(155.70,387.67) scale(1.13,1)" font-family="Liberation Serif" font-size="12.1" fill="#000" stroke="#000" stroke-width="0.12">4</text>
<text transform="translate(162.45,387.67) scale(1.13,1)" font-family="Liberation Serif" font-size="12.1" fill="#000" stroke="#000" stroke-width="0.12">7</text>
<text transform="translate(229.20,385.27) scale(1.13,1.07)" font-family="Liberation Serif" font-size="12.1" fill="#000" stroke="#000" stroke-width="0.12">6</text>
<text transform="translate(235.65,385.47) scale(1.25,0.68)" font-family="Liberation Serif" font-size="12.1" fill="#000" stroke="#000" stroke-width="0.12">0</text>
<text transform="translate(310.20,387.67) scale(1.13,1)" font-family="Liberation Serif" font-size="12.1" fill="#000" stroke="#000" stroke-width="0.12">3</text>
<text transform="translate(316.95,385.47) scale(1.13,0.68)" font-family="Liberation Serif" font-size="12.1" fill="#000" stroke="#000" stroke-width="0.12">1</text>
<text transform="translate(393.80,385.27) scale(1.13,1.07)" font-family="Liberation Serif" font-size="12.1" fill="#000" stroke="#000" stroke-width="0.12">8</text>
<text transform="translate(400.55,387.67) scale(1.13,1)" font-family="Liberation Serif" font-size="12.1" fill="#000" stroke="#000" stroke-width="0.12">7</text>
<text transform="translate(478.10,385.47) scale(1.13,0.68)" font-family="Liberation Serif" font-size="12.1" fill="#000" stroke="#000" stroke-width="0.12">1</text>
<text transform="translate(484.85,387.67) scale(1.13,1)" font-family="Liberation Serif" font-size="12.1" fill="#000" stroke="#000" stroke-width="0.12">7</text>
<rect x="567.2" y="225.5" width="103.7" height="15.05" fill="none" stroke="#217346" stroke-width="2.3"/>
<rect x="667.6" y="237.6" width="5.6" height="5.6" fill="#fff" />
<rect x="668.2" y="238.2" width="4.5" height="4.5" fill="#217346" />
<line x1="547.1" y1="207.4" x2="547.1" y2="254.5" stroke="#22e00c" stroke-width="3.8" stroke-linecap="round"/>
<line x1="545.5" y1="209.4" x2="689" y2="209.4" stroke="#22e00c" stroke-width="3.6" stroke-linecap="round"/>
<line x1="689.6" y1="205.8" x2="689.6" y2="252.5" stroke="#22e00c" stroke-width="3.6" stroke-linecap="round"/>
<line x1="545.6" y1="256.1" x2="688.2" y2="256.1" stroke="#22e00c" stroke-width="3.8" stroke-linecap="round"/>
</svg></body></html>
